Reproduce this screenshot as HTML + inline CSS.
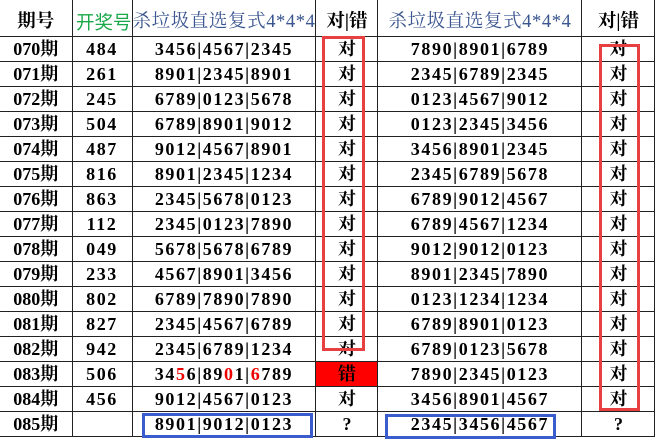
<!DOCTYPE html>
<html><head><meta charset="utf-8"><style>
body{margin:0;width:658px;height:443px;background:#fff;overflow:hidden;position:relative;font-family:"Liberation Serif","Noto Serif CJK SC",serif;font-weight:bold;font-size:18px;color:#000}
table{position:absolute;left:0;top:0;border-collapse:collapse;table-layout:fixed}
td{border:1px solid #222;height:24px;padding:0;text-align:center;white-space:nowrap;overflow:visible;line-height:24px}
td.n{letter-spacing:1.6px}
tr.h td{height:36px;vertical-align:bottom;line-height:28px;border-top:none;font-size:18.5px}
td.c1{border-left:none}
.g{color:#1aa84a;font-weight:normal;font-family:"Noto Sans CJK SC",sans-serif}
.b{color:#3a5590;font-weight:normal}
.r{color:#e00}
.box{position:absolute;border:3px solid #e84040;box-sizing:border-box}
.bb{position:absolute;border:3px solid #3a5ccc;box-sizing:border-box}
.err{background:#f00}
</style></head><body>
<table>
<col style="width:72px"><col style="width:60px"><col style="width:182px"><col style="width:62px"><col style="width:204px"><col style="width:73px">
<tr class="h"><td class="c1">期号</td><td class="g" style="text-align:right;padding-right:0px;overflow:visible">开奖号</td><td class="b" style="text-align:left;overflow:visible;letter-spacing:0.6px">杀垃圾直选复式4*4*4</td><td>对|错</td><td class="b" style="letter-spacing:0.6px">杀垃圾直选复式4*4*4</td><td>对|错</td></tr>
<tr><td class="c1">070期</td><td class="n">484</td><td class="n">3456|4567|2345</td><td>对</td><td class="n">7890|8901|6789</td><td>对</td></tr>
<tr><td class="c1">071期</td><td class="n">261</td><td class="n">8901|2345|8901</td><td>对</td><td class="n">2345|6789|2345</td><td>对</td></tr>
<tr><td class="c1">072期</td><td class="n">245</td><td class="n">6789|0123|5678</td><td>对</td><td class="n">0123|4567|9012</td><td>对</td></tr>
<tr><td class="c1">073期</td><td class="n">504</td><td class="n">6789|8901|9012</td><td>对</td><td class="n">0123|2345|3456</td><td>对</td></tr>
<tr><td class="c1">074期</td><td class="n">487</td><td class="n">9012|4567|8901</td><td>对</td><td class="n">3456|8901|2345</td><td>对</td></tr>
<tr><td class="c1">075期</td><td class="n">816</td><td class="n">8901|2345|1234</td><td>对</td><td class="n">2345|6789|5678</td><td>对</td></tr>
<tr><td class="c1">076期</td><td class="n">863</td><td class="n">2345|5678|0123</td><td>对</td><td class="n">6789|9012|4567</td><td>对</td></tr>
<tr><td class="c1">077期</td><td class="n">112</td><td class="n">2345|0123|7890</td><td>对</td><td class="n">6789|4567|1234</td><td>对</td></tr>
<tr><td class="c1">078期</td><td class="n">049</td><td class="n">5678|5678|6789</td><td>对</td><td class="n">9012|9012|0123</td><td>对</td></tr>
<tr><td class="c1">079期</td><td class="n">233</td><td class="n">4567|8901|3456</td><td>对</td><td class="n">8901|2345|7890</td><td>对</td></tr>
<tr><td class="c1">080期</td><td class="n">802</td><td class="n">6789|7890|7890</td><td>对</td><td class="n">0123|1234|1234</td><td>对</td></tr>
<tr><td class="c1">081期</td><td class="n">827</td><td class="n">2345|4567|6789</td><td>对</td><td class="n">6789|8901|0123</td><td>对</td></tr>
<tr><td class="c1">082期</td><td class="n">942</td><td class="n">2345|6789|1234</td><td>对</td><td class="n">6789|0123|5678</td><td>对</td></tr>
<tr><td class="c1">083期</td><td class="n">506</td><td class="n">34<span class="r">5</span>6|89<span class="r">0</span>1|<span class="r">6</span>789</td><td class="err">错</td><td class="n">7890|2345|0123</td><td>对</td></tr>
<tr><td class="c1">084期</td><td class="n">456</td><td class="n">9012|4567|0123</td><td>对</td><td class="n">3456|8901|4567</td><td>对</td></tr>
<tr><td class="c1">085期</td><td></td><td class="n">8901|9012|0123</td><td>?</td><td class="n">2345|3456|4567</td><td>?</td></tr>
</table>
<div class="box" style="left:322px;top:36px;width:43px;height:315px"></div>
<div class="box" style="left:599px;top:44px;width:41px;height:367px"></div>
<div class="bb" style="left:142px;top:413px;width:171px;height:25px"></div>
<div class="bb" style="left:385px;top:414px;width:171px;height:25px"></div>
</body></html>
